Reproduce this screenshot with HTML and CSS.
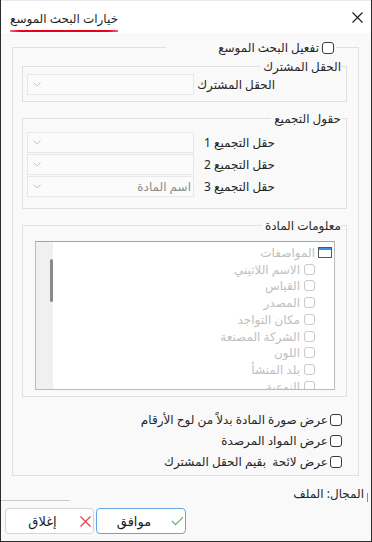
FILE: index.html
```html
<!DOCTYPE html>
<html lang="ar">
<head>
<meta charset="utf-8">
<title>خيارات البحث الموسع</title>
<link rel="stylesheet" href="styles.css">
</head>
<body>
<div class="window">
  <div class="titlebar">
    <div class="title">خيارات البحث الموسع</div>
    <div class="close">
      <svg width="11" height="11" viewBox="0 0 11 11"><path d="M0.5 0.5 L10.5 10.5 M10.5 0.5 L0.5 10.5" stroke="#1a1a1a" stroke-width="1.1" fill="none"/></svg>
    </div>
  </div>
  <div class="client" dir="rtl">
    <fieldset class="group outer">
      <legend class="outer-legend"><span class="check dark"></span><span>تفعيل البحث الموسع</span></legend>

      <fieldset class="group inner">
        <legend>الحقل المشترك</legend>
        <div class="field-row">
          <span class="field-label">الحقل المشترك</span>
          <div class="combo"><span class="combo-text"></span><svg class="chev" width="8" height="5" viewBox="0 0 8 5"><path d="M0.5 0.5 L4 4 L7.5 0.5" stroke="#c4c4c4" stroke-width="1" fill="none"/></svg></div>
        </div>
      </fieldset>

      <fieldset class="group inner group-fields">
        <legend>حقول التجميع</legend>
        <div class="field-row">
          <span class="field-label">حقل التجميع 1</span>
          <div class="combo"><span class="combo-text"></span><svg class="chev" width="8" height="5" viewBox="0 0 8 5"><path d="M0.5 0.5 L4 4 L7.5 0.5" stroke="#c4c4c4" stroke-width="1" fill="none"/></svg></div>
        </div>
        <div class="field-row">
          <span class="field-label">حقل التجميع 2</span>
          <div class="combo"><span class="combo-text"></span><svg class="chev" width="8" height="5" viewBox="0 0 8 5"><path d="M0.5 0.5 L4 4 L7.5 0.5" stroke="#c4c4c4" stroke-width="1" fill="none"/></svg></div>
        </div>
        <div class="field-row">
          <span class="field-label">حقل التجميع 3</span>
          <div class="combo"><span class="combo-text">اسم المادة</span><svg class="chev" width="8" height="5" viewBox="0 0 8 5"><path d="M0.5 0.5 L4 4 L7.5 0.5" stroke="#c4c4c4" stroke-width="1" fill="none"/></svg></div>
        </div>
      </fieldset>

      <fieldset class="group inner group-info">
        <legend>معلومات المادة</legend>
        <div class="listbox">
          <div class="tree">
            <div class="tree-row root"><span class="win-icon"></span><span>المواصفات</span></div>
            <div class="tree-row child"><span class="check light"></span><span>الاسم اللاتيني</span></div>
            <div class="tree-row child"><span class="check light"></span><span>القياس</span></div>
            <div class="tree-row child"><span class="check light"></span><span>المصدر</span></div>
            <div class="tree-row child"><span class="check light"></span><span>مكان التواجد</span></div>
            <div class="tree-row child"><span class="check light"></span><span>الشركة المصنعة</span></div>
            <div class="tree-row child"><span class="check light"></span><span>اللون</span></div>
            <div class="tree-row child"><span class="check light"></span><span>بلد المنشأ</span></div>
            <div class="tree-row child"><span class="check light"></span><span>النوعية</span></div>
          </div>
          <div class="vscroll"><div class="thumb"></div></div>
        </div>
      </fieldset>

      <div class="options">
        <div class="option"><span class="check dark"></span><span>عرض صورة المادة بدلاً من لوح الأرقام</span></div>
        <div class="option"><span class="check dark"></span><span>عرض المواد المرصدة</span></div>
        <div class="option"><span class="check dark"></span><span>عرض لائحة&nbsp; بقيم الحقل المشترك</span></div>
      </div>
    </fieldset>

    <div class="status">
      <span class="status-tick"></span>
      <span class="status-text">المجال: الملف</span>
      <span class="status-spacer"></span>
      <span class="status-line"></span>
    </div>

    <div class="buttons">
      <button class="btn btn-default">
        <svg class="btn-icon" width="13" height="10" viewBox="0 0 13 10"><path d="M1 5 L4.6 8.6 L12 1.2" stroke="#5ab56a" stroke-width="1.2" fill="none"/></svg>
        <span class="btn-text">موافق</span>
      </button>
      <button class="btn">
        <svg class="btn-icon" width="13" height="13" viewBox="0 0 13 13"><path d="M1.5 1.5 L11.5 11.5 M11.5 1.5 L1.5 11.5" stroke="#e0494b" stroke-width="1.3" fill="none"/></svg>
        <span class="btn-text">إغلاق</span>
      </button>
    </div>
  </div>
</div>
</body>
</html>
```
FILE: styles.css
```css
* { box-sizing: border-box; }
html, body { margin: 0; padding: 0; }
body {
  width: 372px;
  height: 542px;
  overflow: hidden;
  background: #f9f9f9;
  font-family: "Noto Sans", "DejaVu Sans", sans-serif;
  font-size: 12px;
  color: #262626;
}
.window {
  width: 372px;
  height: 542px;
  display: flex;
  flex-direction: column;
  border: 1px solid #2c2c2c;
  border-top: none;
  background: #f9f9f9;
}
.titlebar {
  flex: none;
  height: 33px;
  background: #ffffff;
  border-top: 1px solid #e9e9e9;
  display: flex;
  justify-content: space-between;
  align-items: stretch;
  padding: 0 8px 0 9px;
}
.title {
  display: flex;
  align-items: center;
  padding-top: 3px;
  margin-bottom: 1px;
  font-size: 12px;
  color: #1f1f1f;
  background-image: linear-gradient(to right, #ff6a7a 0, #e8001c 10px, #e8001c calc(100% - 10px), #ff5566 100%);
  background-repeat: no-repeat;
  background-position: left bottom;
  background-size: 100% 2px;
}
.close {
  display: flex;
  align-items: center;
  padding-top: 1px;
}
.client {
  flex: 1;
  display: flex;
  flex-direction: column;
}
fieldset.group {
  margin: 0;
  min-width: 0;
  border: 1px solid #e0e0e0;
}
fieldset.group > legend {
  padding: 0 0 0 3px;
  line-height: 15px;
  font-size: 12px;
  color: #2a2a2a;
}
.outer {
  margin: 7px 12px 0 11px !important;
  padding: 4px 11px 3px 9px;
}
.outer > legend.outer-legend {
  width: 170px;
  margin-right: 11px;
  padding: 0 2px 0 0;
  display: flex;
  align-items: center;
  gap: 3px;
  color: #262626;
}
.inner {
  padding: 0 5px 6px 4px;
}
.group-fields {
  margin-top: 9px !important;
  padding-top: 6px;
  padding-bottom: 11px;
  display: flex;
  flex-direction: column;
  gap: 1px;
}
.group-info {
  margin-top: 9px !important;
  padding-top: 8px;
}
.field-row {
  display: flex;
  align-items: center;
  height: 21px;
  margin-right: 66px;
}
.field-label {
  width: 81px;
  flex: none;
  white-space: nowrap;
}
.combo {
  width: 167px;
  height: 21px;
  flex: none;
  border: 1px solid #e7e7e7;
  background: #fbfbfb;
  display: flex;
  align-items: center;
  justify-content: space-between;
  padding: 0 2px 0 5px;
  color: #8c8c8c;
  white-space: nowrap;
}
.chev { flex: none; }
.check {
  flex: none;
  width: 12px;
  height: 12px;
  border-radius: 3px;
  background: #fff;
}
.check.dark { border: 1px solid #3a3a3a; }
.check.light { width: 11px; height: 11px; border: 1px solid #c9c9c9; }
.listbox {
  height: 149px;
  margin: 0 6px 0 8px;
  border: 1px solid #bababa;
  border-top-color: #a3a3a3;
  background: #fff;
  display: flex;
  overflow: hidden;
}
.tree {
  flex: 1;
  padding: 2px 2px 0 0;
  color: #c0c0c0;
}
.tree-row {
  height: 16.75px;
  display: flex;
  align-items: center;
  white-space: nowrap;
}
.tree-row.root { gap: 3px; }
.tree-row.child { gap: 4px; margin-right: 17px; }
.win-icon {
  flex: none;
  width: 14px;
  height: 11px;
  border: 1px solid #555;
  box-shadow: inset 0 2px 0 #3c8fde;
  background: #fff;
}
.vscroll {
  flex: none;
  width: 17px;
  background: #f0f0f0;
  padding: 17px 0 0 7px;
}
.thumb {
  width: 3px;
  height: 43px;
  border-radius: 2px;
  background: #8a8a8a;
}
.options {
  margin: 12px 5px 0 0;
  display: flex;
  flex-direction: column;
}
.option {
  height: 21px;
  display: flex;
  align-items: center;
  gap: 2px;
  white-space: nowrap;
}
.status {
  height: 16px;
  margin-top: 10px;
  display: flex;
  align-items: stretch;
}
.status-tick {
  flex: none;
  width: 1px;
  height: 9px;
  align-self: flex-end;
  margin-right: 3px;
  background: #8c8c8c;
}
.status-text {
  flex: none;
  margin-right: 3px;
  line-height: 16px;
}
.status-spacer { flex: 1; }
.status-line {
  flex: none;
  width: 69px;
  height: 15px;
  border-bottom: 1px solid #cacaca;
}
.buttons {
  display: flex;
  justify-content: flex-end;
  gap: 2px;
  margin: 6px 0 0 4px;
}
.btn {
  width: 89px;
  height: 26px;
  margin: 0;
  padding: 0 1px 0 0;
  border: 1px solid #d4d4d4;
  border-radius: 4px;
  background: #ffffff;
  display: flex;
  align-items: center;
  font-family: inherit;
  font-size: 13px;
  color: #1a1a1a;
}
.btn-default {
  width: 90px;
  border-color: #62a4e0;
}
.btn-icon { flex: none; }
.btn-text { flex: 1; text-align: center; }
```
